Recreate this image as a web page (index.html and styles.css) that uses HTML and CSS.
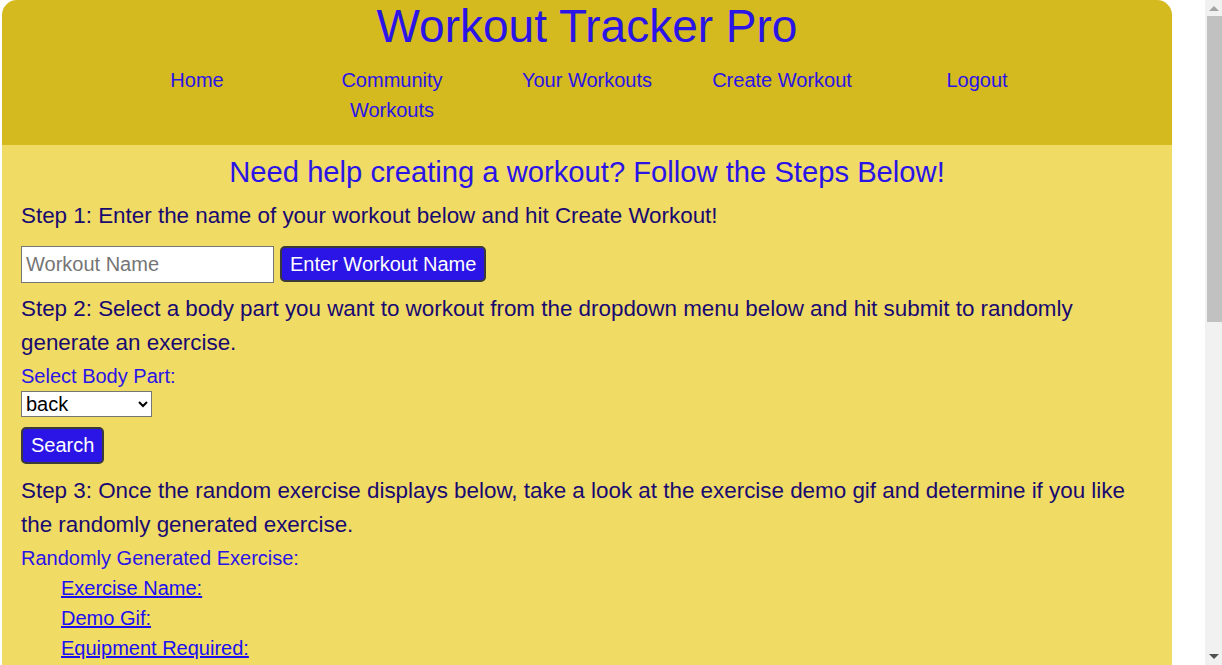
FILE: index.html
```html
<!DOCTYPE html>
<html lang="en">
<head>
<meta charset="utf-8">
<title>Workout Tracker Pro</title>
<link rel="stylesheet" href="styles.css">
</head>
<body>
<div class="page">
  <header class="header">
    <h1 class="title">Workout Tracker Pro</h1>
    <nav>
      <ul class="nav">
        <li><a href="#">Home</a></li>
        <li><a href="#">Community Workouts</a></li>
        <li><a href="#">Your Workouts</a></li>
        <li><a href="#">Create Workout</a></li>
        <li><a href="#">Logout</a></li>
      </ul>
    </nav>
  </header>
  <main class="main">
    <h2 class="heading">Need help creating a workout? Follow the Steps Below!</h2>
    <p class="step step-first">Step 1: Enter the name of your workout below and hit Create Workout!</p>
    <form class="name-row">
      <input class="name-input" type="text" placeholder="Workout Name">
      <button class="btn" type="button">Enter Workout Name</button>
    </form>
    <p class="step">Step 2: Select a body part you want to workout from the dropdown menu below and hit submit to randomly generate an exercise.</p>
    <label class="label" for="part">Select Body Part:</label>
    <select class="select" id="part">
      <option>back</option>
      <option>cardio</option>
      <option>chest</option>
    </select>
    <button class="btn btn-search" type="button">Search</button>
    <p class="step">Step 3: Once the random exercise displays below, take a look at the exercise demo gif and determine if you like the randomly generated exercise.</p>
    <div class="label">Randomly Generated Exercise:</div>
    <ul class="details">
      <li><a href="#">Exercise Name:</a></li>
      <li><a href="#">Demo Gif:</a></li>
      <li><a href="#">Equipment Required:</a></li>
      <li><a href="#">Target Muscle:</a></li>
    </ul>
    <p class="step">Step 4: If you like the exercise, enter the number of sets and reps below and hit Add Exercise!</p>
  </main>
</div>
<div class="scrollbar" aria-hidden="true">
  <span class="sb-arrow sb-up"></span>
  <span class="sb-thumb"></span>
  <span class="sb-arrow sb-down"></span>
</div>
</body>
</html>
```
FILE: styles.css
```css
html, body {
  margin: 0;
  padding: 0;
  background: #ffffff;
}

body {
  font-family: "Liberation Sans", Arial, sans-serif;
}

.page {
  width: 1170px;
  margin-left: 2px;
}

.header {
  background: #d4b91f;
  border-radius: 15px 15px 0 0;
  padding: 0 0 20px;
  text-align: center;
}

.title {
  margin: 0;
  font-size: 46px;
  font-weight: normal;
  line-height: 53px;
  color: #2a14e6;
}

.nav {
  list-style: none;
  margin: 12px 0 0;
  padding: 0;
  display: flex;
  justify-content: center;
}

.nav li {
  width: 195px;
  box-sizing: border-box;
  padding: 0 10px;
  text-align: center;
  font-size: 20px;
  line-height: 30px;
}

.nav a {
  color: #2a14e6;
  text-decoration: none;
}

.main {
  background: #f0db64;
  padding: 11px 19px 40px;
}

.heading {
  margin: 0;
  text-align: center;
  font-size: 29.2px;
  font-weight: normal;
  line-height: 32px;
  color: #2a14e6;
}

.step {
  margin: 0;
  font-size: 22.4px;
  line-height: 34px;
  color: #190a70;
}

.step-first {
  margin-top: 11px;
}

.name-row {
  display: flex;
  gap: 6px;
  margin: 13px 0 9px;
}

.name-input {
  width: 253px;
  height: 37px;
  box-sizing: border-box;
  border: 1px solid #767676;
  padding: 0 4px;
  font-family: "Liberation Sans", Arial, sans-serif;
  font-size: 20px;
  background: #ffffff;
}

.name-input::placeholder {
  color: #757575;
}

.btn {
  height: 36px;
  box-sizing: border-box;
  padding: 0 8px;
  background: #2b14e6;
  color: #ffffff;
  border: 2px solid #3a3a3a;
  border-radius: 5px;
  font-family: "Liberation Sans", Arial, sans-serif;
  font-size: 20px;
}

.label {
  display: block;
  font-size: 20px;
  line-height: 22px;
  margin-top: 5px;
  color: #2a14e6;
}

.select {
  display: block;
  margin-top: 4px;
  width: 131px;
  height: 26px;
  font-family: "Liberation Sans", Arial, sans-serif;
  font-size: 20px;
  border: 1px solid #767676;
  background: #ffffff;
  color: #000000;
}

.btn-search {
  display: block;
  margin: 10px 0 10px;
  height: 37px;
}

.details {
  list-style: none;
  margin: 4px 0 0;
  padding: 0 0 0 40px;
}

.details li {
  font-size: 20px;
  line-height: 30px;
}

.details a {
  color: #1a0ff0;
  text-decoration: underline;
}

.scrollbar {
  position: fixed;
  top: 0;
  right: 0;
  width: 17px;
  height: 100%;
  background: #f1f1f1;
}

.sb-thumb {
  position: absolute;
  top: 16px;
  left: 2px;
  width: 15px;
  height: 306px;
  background: #c1c1c1;
}

.sb-arrow {
  position: absolute;
  left: 4px;
  width: 0;
  height: 0;
  border-left: 5px solid transparent;
  border-right: 5px solid transparent;
}

.sb-up {
  top: 6px;
  border-bottom: 5px solid #a3a3a3;
}

.sb-down {
  bottom: 6px;
  border-top: 5px solid #505050;
}
```
